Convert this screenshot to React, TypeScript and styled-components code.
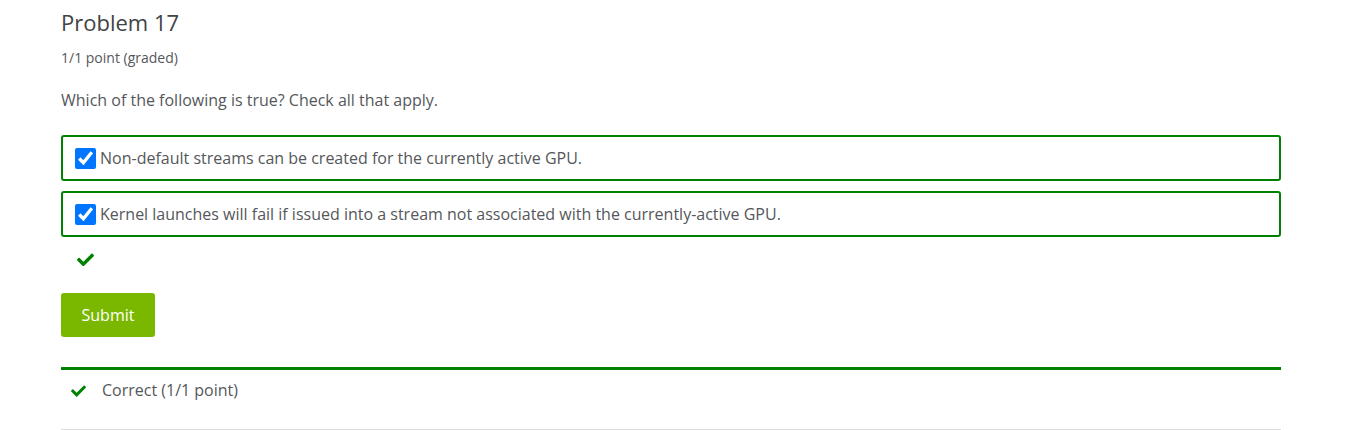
import styled, { createGlobalStyle } from "styled-components";

const GlobalStyle = createGlobalStyle`
  body {
    margin: 0;
    background: #fff;
    font-family: "Open Sans", "Liberation Sans", sans-serif;
    color: #55575b;
  }
`;

const Page = styled.div`
  padding: 0 69px 0 61px;
`;

const Title = styled.h3`
  margin: 0;
  padding-top: 8px;
  font-size: 22px;
  font-weight: 400;
  line-height: 28px;
  color: #414345;
`;

const Points = styled.div`
  margin-top: 13px;
  font-size: 14px;
  line-height: 18px;
`;

const Prompt = styled.p`
  margin: 23px 0 24px;
  font-size: 16px;
  line-height: 21px;
`;

const Choices = styled.div`
  display: flex;
  flex-direction: column;
  gap: 10px;
`;

const Choice = styled.label<{ $correct?: boolean }>`
  display: flex;
  align-items: center;
  gap: 4px;
  height: 46px;
  box-sizing: border-box;
  padding: 0 12px;
  border: 2px solid ${(p) => (p.$correct ? "#008100" : "#ccc")};
  border-radius: 3px;
  font-size: 16px;
`;

const Box = styled.input`
  width: 21px;
  height: 21px;
  margin: 0;
  accent-color: #0075ff;
`;

const Mark = styled.div`
  padding: 16px 0 0 16px;
  height: 27px;
`;

const Submit = styled.button`
  margin-top: 13px;
  width: 94px;
  height: 44px;
  border: 0;
  border-radius: 3px;
  background: #7ab800;
  color: #fff;
  font-family: inherit;
  font-size: 16px;
`;

const Result = styled.div`
  margin-top: 30px;
  border-top: 3px solid #008100;
  border-bottom: 1px solid #ddd;
  height: 63px;
  display: flex;
  align-items: flex-start;
  padding: 8px 0 0 10px;
  box-sizing: border-box;
  gap: 16px;
  font-size: 16px;
  line-height: 24px;
`;

const ResultIcon = styled.span`
  padding-top: 7px;
`;

function Check({ size }: { size: number }) {
  return (
    <svg width={size} height={size * 0.78} viewBox="0 0 512 400" style={{ display: "block" }}>
      <path
        fill="#008100"
        d="M173.9 390.8L7.5 224.4c-10-10-10-26.2 0-36.2l36.2-36.2c10-10 26.2-10 36.2 0L192 264.1 432.1 24c10-10 26.2-10 36.2 0l36.2 36.2c10 10 10 26.2 0 36.2L210.1 390.8c-10 10-26.2 10-36.2 0z"
      />
    </svg>
  );
}

export default function App() {
  return (
    <Page>
      <GlobalStyle />
      <Title>Problem 17</Title>
      <Points>1/1 point (graded)</Points>
      <Prompt>Which of the following is true? Check all that apply.</Prompt>
      <Choices>
        <Choice $correct>
          <Box type="checkbox" checked readOnly />
          Non-default streams can be created for the currently active GPU.
        </Choice>
        <Choice $correct>
          <Box type="checkbox" checked readOnly />
          Kernel launches will fail if issued into a stream not associated with the currently-active GPU.
        </Choice>
      </Choices>
      <Mark>
        <Check size={17} />
      </Mark>
      <Submit>Submit</Submit>
      <Result>
        <ResultIcon>
          <Check size={15} />
        </ResultIcon>
        <span>Correct (1/1 point)</span>
      </Result>
    </Page>
  );
}
